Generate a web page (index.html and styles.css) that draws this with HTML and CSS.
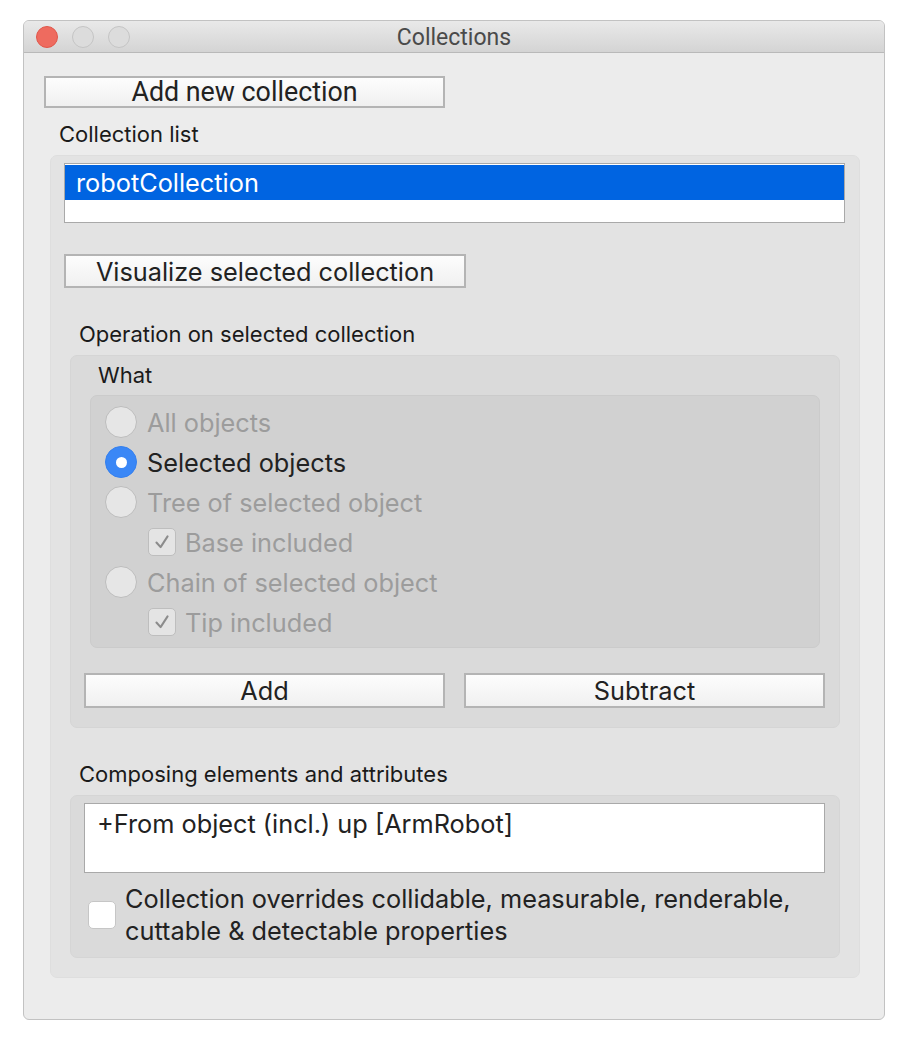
FILE: index.html
```html
<!DOCTYPE html>
<html>
<head>
<meta charset="utf-8">
<link rel="stylesheet" href="styles.css">
</head>
<body>
<div class="window">
  <div class="titlebar">
    <div class="lights">
      <span class="light red"></span>
      <span class="light"></span>
      <span class="light"></span>
    </div>
    <div class="title">Collections</div>
    <div></div>
  </div>
  <div class="content">
    <button class="btn btn-add-new">Add new collection</button>
    <div class="label label-list">Collection list</div>
    <div class="group group1">
      <div class="listbox">
        <div class="list-row selected">robotCollection</div>
      </div>
      <button class="btn btn-visualize">Visualize selected collection</button>
      <div class="label label-op">Operation on selected collection</div>
      <div class="group group2">
        <div class="label label-what">What</div>
        <div class="group group3">
          <div class="opt disabled"><span class="radio"></span>All objects</div>
          <div class="opt"><span class="radio on"></span>Selected objects</div>
          <div class="opt disabled"><span class="radio"></span>Tree of selected object</div>
          <div class="opt sub disabled"><span class="check"><svg viewBox="0 0 28 28" width="28" height="28"><polyline points="8,14.5 12.5,19.5 20,8" fill="none" stroke="#8c8c8c" stroke-width="2.2" stroke-linecap="round" stroke-linejoin="round"/></svg></span>Base included</div>
          <div class="opt disabled"><span class="radio"></span>Chain of selected object</div>
          <div class="opt sub disabled"><span class="check"><svg viewBox="0 0 28 28" width="28" height="28"><polyline points="8,14.5 12.5,19.5 20,8" fill="none" stroke="#8c8c8c" stroke-width="2.2" stroke-linecap="round" stroke-linejoin="round"/></svg></span>Tip included</div>
        </div>
        <div class="btn-row">
          <button class="btn btn-half">Add</button>
          <button class="btn btn-half">Subtract</button>
        </div>
      </div>
      <div class="label label-comp">Composing elements and attributes</div>
      <div class="group group4">
        <div class="textarea">+From object (incl.) up [ArmRobot]</div>
        <div class="override">
          <span class="check white"></span>
          <div class="override-text">Collection overrides collidable, measurable, renderable,<br>cuttable &amp; detectable properties</div>
        </div>
      </div>
    </div>
  </div>
</div>
</body>
</html>
```
FILE: styles.css
```css
html, body {
  margin: 0;
  padding: 0;
  background: #ffffff;
}
body {
  font-family: Inter, "Noto Sans", "Liberation Sans", sans-serif;
  color: #222222;
}
.window {
  box-sizing: border-box;
  width: 862px;
  height: 1000px;
  margin: 20px 0 0 23px;
  border: 1px solid #c2c2c2;
  border-radius: 6px;
  background: #ececec;
  overflow: hidden;
}
.titlebar {
  box-sizing: border-box;
  height: 32px;
  border-bottom: 1px solid #b9b9b9;
  background: linear-gradient(#e9e9e9, #d4d4d4);
  display: grid;
  grid-template-columns: 1fr auto 1fr;
  align-items: center;
}
.lights {
  display: flex;
  gap: 14px;
  padding-left: 12px;
}
.light {
  box-sizing: border-box;
  width: 22px;
  height: 22px;
  border-radius: 50%;
  background: #dcdcdc;
  border: 1px solid #c4c4c4;
}
.light.red {
  background: #ee6b5f;
  border-color: #e0574b;
}
.title {
  font-family: Roboto, "Liberation Sans", sans-serif;
  font-size: 23px;
  color: #4a4a4a;
  padding-top: 1px;
}
.content {
  padding: 23px 0 0 20px;
}
.btn {
  box-sizing: border-box;
  display: block;
  margin: 0;
  padding: 0;
  border: 2px solid #b4b4b4;
  background: linear-gradient(#fdfdfd, #f0f0f0);
  font-family: Inter, "Noto Sans", "Liberation Sans", sans-serif;
  font-size: 25.3px;
  color: #222222;
  text-align: center;
}
.btn-add-new {
  width: 401px;
  height: 32px;
  font-family: Roboto, "Liberation Sans", sans-serif;
  font-size: 26.8px;
  line-height: 28px;
}
.label {
  font-size: 22px;
  line-height: 24px;
  height: 24px;
  color: #1a1a1a;
}
.label-list {
  margin: 14px 0 0 15px;
}
.group {
  box-sizing: border-box;
  border-radius: 7px;
}
.group1 {
  width: 810px;
  margin: 9px 0 0 6px;
  padding: 7px 14px 19px 13px;
  background: #e3e3e3;
  border: 1px solid #dedede;
}
.listbox {
  box-sizing: border-box;
  height: 60px;
  border: 1px solid #a9a9a9;
  background: #ffffff;
  padding-top: 1px;
}
.list-row {
  height: 35px;
  line-height: 35px;
  padding-left: 11px;
  font-size: 25.3px;
}
.list-row.selected {
  background: #0064e1;
  color: #ffffff;
}
.btn-visualize {
  width: 402px;
  height: 34px;
  margin-top: 31px;
}
.label-op {
  margin: 34px 0 0 15px;
}
.group2 {
  width: 770px;
  margin: 9px 0 0 6px;
  padding: 7px 14px 19px 19px;
  background: #dadada;
  border: 1px solid #d5d5d5;
}
.label-what {
  margin-left: 8px;
}
.group3 {
  width: 730px;
  margin-top: 8px;
  padding: 6px 0 5px 14px;
  background: #d1d1d1;
  border: 1px solid #cbcbcb;
}
.opt {
  display: flex;
  align-items: center;
  gap: 10px;
  height: 40px;
  font-size: 25.3px;
  color: #222222;
}
.opt.disabled {
  color: #9c9c9c;
}
.opt.sub {
  padding-left: 43px;
}
.opt.sub .check {
  margin-right: -1px;
}
.radio {
  box-sizing: border-box;
  width: 32px;
  height: 32px;
  border-radius: 50%;
  background: #e6e6e6;
  border: 1px solid #bdbdbd;
  flex: none;
}
.radio.on {
  background: #3a87f6;
  border-color: #3580ee;
  display: flex;
  align-items: center;
  justify-content: center;
}
.radio.on::after {
  content: "";
  width: 11px;
  height: 11px;
  border-radius: 50%;
  background: #ffffff;
}
.check {
  box-sizing: border-box;
  width: 28px;
  height: 28px;
  border-radius: 5px;
  background: #e4e4e4;
  border: 1px solid #bebebe;
  flex: none;
  display: flex;
  align-items: center;
  justify-content: center;
}
.check svg {
  display: block;
}
.check.white {
  background: #ffffff;
  border-color: #c6c6c6;
}
.btn-row {
  display: flex;
  gap: 19px;
  margin: 25px 0 0 -6px;
}
.btn-half {
  width: 361px;
  height: 35px;
}
.label-comp {
  margin: 34px 0 0 15px;
}
.group4 {
  width: 770px;
  margin: 9px 0 0 6px;
  padding: 7px 14px 10px 13px;
  background: #dadada;
  border: 1px solid #d5d5d5;
}
.textarea {
  box-sizing: border-box;
  height: 70px;
  border: 1px solid #a9a9a9;
  background: #ffffff;
  padding: 6px 0 0 12px;
  font-size: 25.3px;
  line-height: 28px;
}
.override {
  display: flex;
  align-items: center;
  gap: 9px;
  margin-top: 10px;
  padding-left: 4px;
}
.override-text {
  font-size: 25.3px;
  line-height: 32px;
  color: #222222;
}
```
